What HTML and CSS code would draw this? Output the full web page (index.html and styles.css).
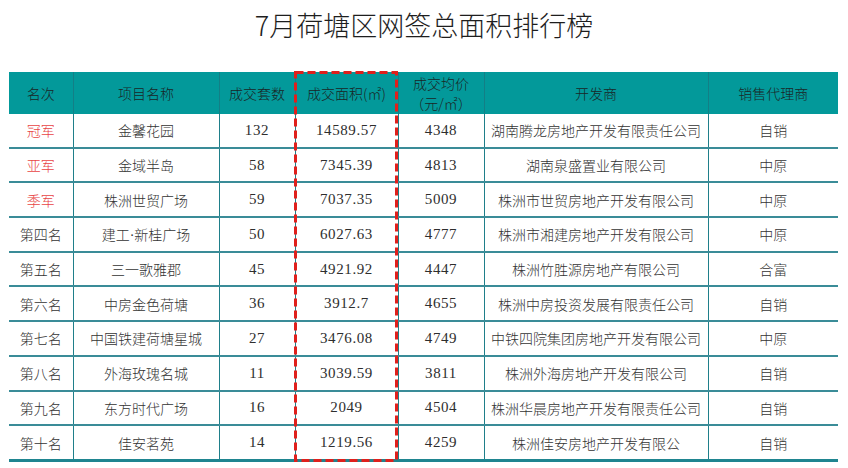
FILE: index.html
```html
<!DOCTYPE html>
<html lang="zh-CN">
<head>
<meta charset="utf-8">
<title>7月荷塘区网签总面积排行榜</title>
<link rel="stylesheet" href="styles.css">
</head>
<body>
<h1 class="title">7月荷塘区网签总面积排行榜</h1>
<div class="wrap">
  <table class="rank">
    <colgroup>
      <col class="c1"><col class="c2"><col class="c3"><col class="c4"><col class="c5"><col class="c6"><col class="c7">
    </colgroup>
    <thead>
      <tr>
        <th>名次</th><th>项目名称</th><th>成交套数</th><th>成交面积(㎡)</th><th class="two"><span class="ln">成交均价</span><span class="ln">（元/㎡）</span></th><th>开发商</th><th>销售代理商</th>
      </tr>
    </thead>
    <tbody>
      <tr><td class="red">冠军</td><td>金馨花园</td><td class="num">132</td><td class="num">14589.57</td><td class="num">4348</td><td>湖南腾龙房地产开发有限责任公司</td><td>自销</td></tr>
      <tr><td class="red">亚军</td><td>金域半岛</td><td class="num">58</td><td class="num">7345.39</td><td class="num">4813</td><td>湖南泉盛置业有限公司</td><td>中原</td></tr>
      <tr><td class="red">季军</td><td>株洲世贸广场</td><td class="num">59</td><td class="num">7037.35</td><td class="num">5009</td><td>株洲市世贸房地产开发有限公司</td><td>中原</td></tr>
      <tr><td>第四名</td><td>建工·新桂广场</td><td class="num">50</td><td class="num">6027.63</td><td class="num">4777</td><td>株洲市湘建房地产开发有限公司</td><td>中原</td></tr>
      <tr><td>第五名</td><td>三一歌雅郡</td><td class="num">45</td><td class="num">4921.92</td><td class="num">4447</td><td>株洲竹胜源房地产有限公司</td><td>合富</td></tr>
      <tr><td>第六名</td><td>中房金色荷塘</td><td class="num">36</td><td class="num">3912.7</td><td class="num">4655</td><td>株洲中房投资发展有限责任公司</td><td>自销</td></tr>
      <tr><td>第七名</td><td>中国铁建荷塘星城</td><td class="num">27</td><td class="num">3476.08</td><td class="num">4749</td><td>中铁四院集团房地产开发有限公司</td><td>中原</td></tr>
      <tr><td>第八名</td><td>外海玫瑰名城</td><td class="num">11</td><td class="num">3039.59</td><td class="num">3811</td><td>株洲外海房地产开发有限公司</td><td>自销</td></tr>
      <tr><td>第九名</td><td>东方时代广场</td><td class="num">16</td><td class="num">2049</td><td class="num">4504</td><td>株洲华晨房地产开发有限责任公司</td><td>自销</td></tr>
      <tr><td>第十名</td><td>佳安茗苑</td><td class="num">14</td><td class="num">1219.56</td><td class="num">4259</td><td>株洲佳安房地产开发有限公</td><td>自销</td></tr>
    </tbody>
  </table>
  <svg class="highlight" width="104" height="391" viewBox="0 0 104 391" aria-hidden="true">
    <rect x="1.5" y="1.5" width="101" height="388" fill="none" stroke="#e0201c" stroke-width="3" stroke-dasharray="8 4"/>
  </svg>
</div>
</body>
</html>
```
FILE: styles.css
```css
html, body {
  margin: 0;
  padding: 0;
  background: #ffffff;
}
body {
  width: 848px;
  height: 468px;
  overflow: hidden;
  font-family: "Liberation Serif", "Noto Sans CJK SC", serif;
  color: #333333;
}
.title {
  margin: 0;
  padding-top: 8px;
  height: 72px;
  box-sizing: border-box;
  text-align: center;
  font-family: "Noto Sans CJK SC", sans-serif;
  font-weight: 300;
  font-size: 27px;
  line-height: 34px;
  color: #1e1e1e;
}
.wrap {
  position: relative;
  margin-left: 9px;
  width: 829px;
}
.rank {
  width: 829px;
  table-layout: fixed;
  border-collapse: collapse;
  font-size: 14px;
}
.c1 { width: 64px; }
.c2 { width: 146px; }
.c3 { width: 76px; }
.c4 { width: 103px; }
.c5 { width: 86px; }
.c6 { width: 224px; }
.c7 { width: 130px; }
.rank th {
  height: 42px;
  padding: 0;
  background: #03999a;
  color: #1a2626;
  font-weight: 300;
  font-family: "Noto Sans CJK SC", sans-serif;
  font-size: 14px;
  line-height: 18px;
  text-align: center;
  vertical-align: middle;
  border-left: 1px solid #137f86;
}
.rank th.two .ln {
  display: block;
  line-height: 20px;
}
.rank th:first-child,
.rank td:first-child {
  border-left: none;
}
.rank td {
  height: 32.7px;
  padding: 0;
  text-align: center;
  vertical-align: middle;
  font-family: "Liberation Serif", "Noto Sans CJK SC", serif;
  font-weight: 300;
  color: #333333;
  border-left: 1.5px solid #1f7f8a;
  border-bottom: 2px solid #3a8c98;
}
.rank tbody tr:last-child td {
  border-bottom: 3px solid #1f8590;
}
.rank td.num {
  font-size: 15px;
  letter-spacing: 0.6px;
  color: #2e2e2e;
}
.rank td.red {
  color: #e84444;
}
.highlight {
  position: absolute;
  left: 285px;
  top: -1px;
  pointer-events: none;
}
```
